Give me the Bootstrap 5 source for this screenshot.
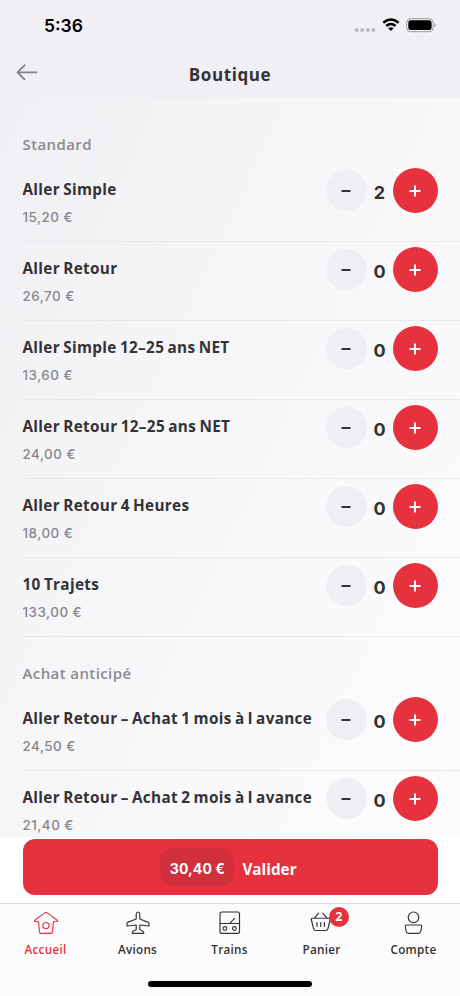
<!DOCTYPE html>
<html lang="fr">
<head>
<meta charset="utf-8">
<meta name="viewport" content="width=device-width, initial-scale=1">
<title>Boutique</title>
<link href="https://cdn.jsdelivr.net/npm/bootstrap@5.3.0/dist/css/bootstrap.min.css" rel="stylesheet">
<style>
:root{--red:#e6323e;--ink:#333335;--muted:#87868c}
body{font-family:"Open Sans","Noto Sans",sans-serif;color:var(--ink);background:#fff}
.phone{width:460px;height:996px}
.top-zone{height:98px;background:#f0eff4}
.status{height:52px;padding:0 23px 0 44px}
.clock{font:600 17.5px/1 "Inter",sans-serif;color:#000;width:44px}
.title-row{height:44px}
.page-title{font-size:17px;font-weight:700;line-height:24px;letter-spacing:.6px;padding-top:1px}
.back{left:16px;top:12px}
.catalog{height:739px;background:linear-gradient(115deg,#f0f0f4 0%,#f6f6f8 40%,#f9f9fb 65%,#fcfcfd 100%);padding-left:22.5px}
.group-label{color:#8b8a90;font-size:15px;line-height:20px;font-weight:600;letter-spacing:.4px}
.first-label{padding-top:36px;height:65px}
.next-label{padding-top:26px;height:55px}
.ticket{height:79px;border-bottom:1px solid #e9e9ed;padding:5px 22.5px 0 0}
.ticket-name{font-size:15.3px;line-height:20px;font-weight:700;padding-top:11px;white-space:nowrap;letter-spacing:.32px;word-spacing:-1px}
.ticket-price{font:500 13.4px/18px "Inter",sans-serif;color:var(--muted);padding-top:8.5px;letter-spacing:.5px}
.round-btn{border:0;border-radius:50%;padding:0}
.minus{width:41px;height:41px;background:#efeef2;margin-top:2px}
.plus{width:45px;height:45px;background:var(--red)}
.qty{width:26px;font:700 18px/24px "Inter",sans-serif;padding:13px 0 0 0}
.pay-zone{height:66px;padding:2px 22.5px 0}
.pay{height:56px;border-radius:12px;background:var(--red);color:#fff;border:0;font-weight:700;font-size:15.3px;padding-right:9px}
.sum{width:74px;height:38px;border-radius:14px;background:#cf303c;font:700 14px/20px "Inter",sans-serif;letter-spacing:.1px}
.pay-text{padding-top:4px}
.tabs{height:93px;border-top:1px solid #dadadc;background:#fcfcfc}
.tab{width:92px;color:var(--ink);text-decoration:none;font-size:11.7px;font-weight:600;padding-top:6px;letter-spacing:.28px}
.tab.on{color:var(--red)}
.tab svg{width:26px;height:26px;fill:none;stroke:currentColor;stroke-width:1.15;stroke-linejoin:round;stroke-linecap:round}
.tab-text{line-height:16px;padding-top:5px;margin-left:-1px}
.count{left:53px;top:3px;width:20px;height:20px;border-radius:50%;background:var(--red);color:#fff;font-size:12.5px;font-weight:700;padding-top:1px}
.home-line{width:164px;height:6px;border-radius:3px;background:#000;left:148px;bottom:9px}
</style>
</head>
<body>
<main class="phone overflow-hidden d-flex flex-column position-relative">
<header class="top-zone flex-shrink-0">
<div class="status d-flex align-items-center justify-content-between">
<div class="clock">5:36</div>
<svg width="84" height="20" viewBox="0 0 84 20"><g fill="#bbbabf"><circle cx="3.600" cy="14" r="2"/><circle cx="9.200" cy="14" r="2"/><circle cx="14.800" cy="14" r="2"/><circle cx="20.400" cy="14" r="2"/></g><path d="M30.300 6.700q7.600-6.300 15.200 0M33.200 10q4.700-4 9.400 0" fill="none" stroke="#000" stroke-width="2.500"/><path d="M35.200 12.200q2.700-2 5.400 0L37.900 15Z"/><rect x="53.700" y="2.700" width="26.500" height="13" rx="4" fill="none" stroke="#9b9a9e"/><rect x="55.300" y="4.300" width="23.300" height="9.800" rx="2.400"/><path d="M81.600 7v4.400q2-2.200 0-4.400Z" fill="#888"/></svg>
</div>
<div class="title-row position-relative d-flex justify-content-center align-items-center">
<a class="back position-absolute d-flex" href="#" aria-label="Retour"><svg width="22" height="17" viewBox="0 0 22 17" fill="none" stroke="#828186" stroke-width="1.800" stroke-linecap="round" stroke-linejoin="round"><path d="M20.300 8.300H1.500M8.500 1.300L1.500 8.300l7 7"/></svg></a>
<h1 class="page-title m-0">Boutique</h1>
</div>
</header>
<section class="catalog overflow-hidden flex-shrink-0" id="catalog">
<div class="group-label first-label">Standard</div>
<div data-group="0"></div>
<div class="group-label next-label">Achat anticipé</div>
<div data-group="1"></div>
</section>
<div class="pay-zone flex-shrink-0"><button class="pay w-100 d-flex align-items-center justify-content-center gap-2"><span class="sum d-flex align-items-center justify-content-center"><span class="pay-text">30,40 €</span></span><span class="pay-text">Valider</span></button></div>
<nav class="tabs d-flex flex-shrink-0">
<a class="tab on text-center" href="#"><svg viewBox="0 0 26 26"><path d="M13 2.300Q11.500 3 1.500 10.500q-.5.900.6 1L5.500 11.800l1.100 10.400q.2 1.200 1.200 1.200h10.400q1 0 1.200-1.200L20.500 11.800l3.400-.3q1.100-.1.600-1Q14.500 3 13 2.300Z"/><circle cx="13" cy="15.600" r="3.100"/></svg><div class="tab-text">Accueil</div></a>
<a class="tab text-center" href="#"><svg viewBox="0 0 26 26"><path d="M11.200 9V4.200Q11.400 2 13 2t1.800 2.200V9l8.600 3.400q.6.300.6 1V16l-9.200-1v4.500l3.400 2q.5.300.5 1V23.400H7.300V22.500q0-.7.500-1l3.400-2V15L2 16v-2.600q0-.7.600-1Z"/></svg><div class="tab-text">Avions</div></a>
<a class="tab text-center" href="#"><svg viewBox="0 0 26 26"><rect x="3" y="2" width="19.500" height="21.400" rx="2"/><path d="M3 13.500h19.500M12.700 13.300l4.800-5"/><circle cx="7.900" cy="18.500" r="1.900"/><circle cx="17.400" cy="18.500" r="1.900"/></svg><div class="tab-text">Trains</div></a>
<a class="tab text-center position-relative" href="#"><svg viewBox="0 0 26 26"><path d="M3.500 8.200Q2.100 8.200 2.300 9.500L4.500 18.500q.5 2 2 2h10.500q1.500 0 2-2L21.200 9.500q.2-1.300-1.200-1.300ZM5.500 8.200 9.700 3.200M13.800 3.200l4.300 5M8 12.500v4M11.700 12.500v4M15.400 12.500v4"/></svg><span class="count position-absolute d-flex align-items-center justify-content-center">2</span><div class="tab-text">Panier</div></a>
<a class="tab text-center" href="#"><svg viewBox="0 0 26 26"><circle cx="12.500" cy="7.300" r="5.300"/><path d="M5.500 15h14q1.300 0 1.200 1.200-.5 4.700-1.300 6-.6 1.100-2.100 1.100H7.700q-1.500 0-2.100-1.100-.8-1.300-1.300-6Q4.200 15 5.500 15Z"/></svg><div class="tab-text">Compte</div></a>
</nav>
<div class="home-line position-absolute"></div>
</main>
<script>
const groups=[[["Aller Simple","15,20 €",2],["Aller Retour","26,70 €",0],["Aller Simple 12–25 ans NET","13,60 €",0],["Aller Retour 12–25 ans NET","24,00 €",0],["Aller Retour 4 Heures","18,00 €",0],["10 Trajets","133,00 €",0]],[["Aller Retour – Achat 1 mois à l avance","24,50 €",0],["Aller Retour – Achat 2 mois à l avance","21,40 €",0]]];
groups.forEach((list,i)=>{document.querySelector(`[data-group="${i}"]`).innerHTML=list.map(([name,price,n])=>`<article class="ticket d-flex justify-content-between"><div><div class="ticket-name">${name}</div><div class="ticket-price">${price}</div></div><div class="d-flex align-items-start"><button class="round-btn minus d-flex align-items-center justify-content-center" aria-label="Retirer"><svg width="10" height="4"><path d="M.5 2h9" stroke="#333335" stroke-width="2"/></svg></button><div class="qty text-center">${n}</div><button class="round-btn plus d-flex align-items-center justify-content-center" aria-label="Ajouter"><svg width="12" height="12"><path d="M.5 6h11M6 .5v11" stroke="#fff" stroke-width="2"/></svg></button></div></article>`).join("")});
</script>
<script src="https://cdn.jsdelivr.net/npm/bootstrap@5.3.0/dist/js/bootstrap.bundle.min.js"></script>
</body>
</html>
